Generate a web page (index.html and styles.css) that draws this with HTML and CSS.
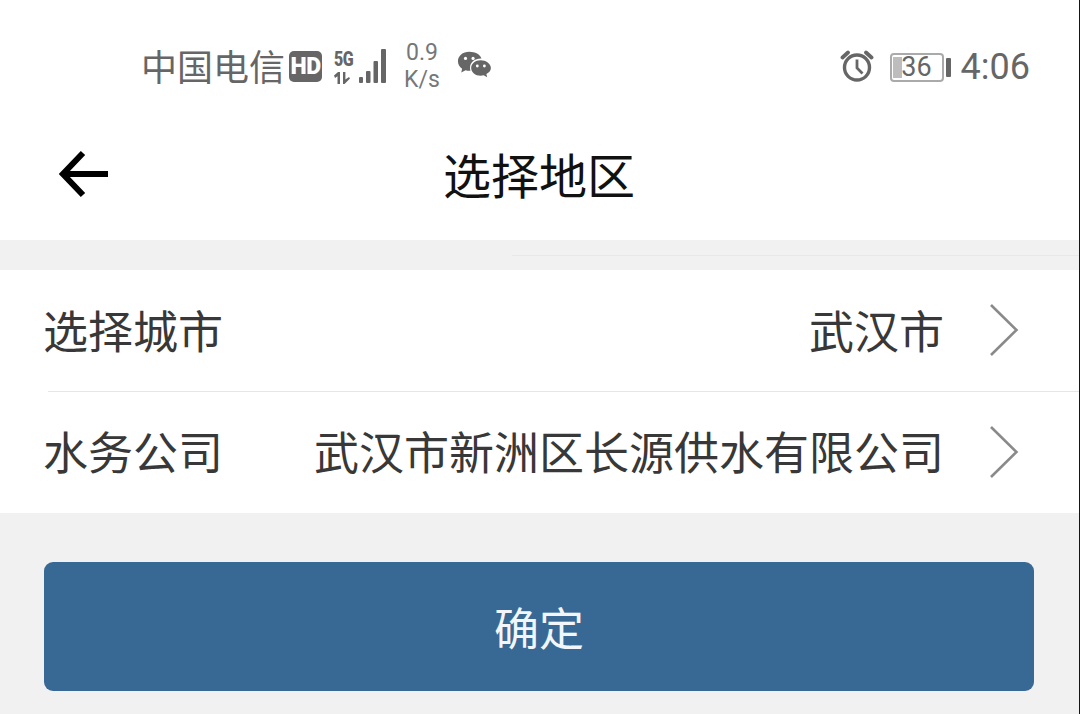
FILE: index.html
```html
<!DOCTYPE html>
<html lang="zh">
<head>
<meta charset="utf-8">
<title>选择地区</title>
<link rel="stylesheet" href="styles.css">
</head>
<body>
<div class="screen">
  <header class="header">
    <div class="status">
      <div class="status-left">
        <span class="carrier">中国电信</span>
        <span class="hd">HD</span>
        <span class="net">
          <span class="net-labels"><span class="net-5g">5G</span><svg class="net-arrows" width="20" height="12" viewBox="0 0 20 12"><g fill="#666"><path d="M0 3.500 4 0h2v12H3.500V4.200L1 6z"/><path d="M9 0h2.400v7.500L15 5l1 1.500L10.500 12H9z"/></g></svg></span>
          <svg class="signal" width="28" height="36" viewBox="0 0 28 36"><g fill="#666"><rect x="0" y="29" width="4" height="6" rx="1"/><rect x="7" y="23" width="4.500" height="12" rx="1"/><rect x="14.500" y="13" width="4.500" height="22" rx="1"/><rect x="22" y="1" width="5" height="34" rx="1"/></g></svg>
        </span>
        <span class="speed"><span>0.9</span><span>K/s</span></span>
        <svg class="wechat" width="34" height="32" viewBox="0 0 36 32"><path fill="#666" d="M13 1C6 1 1 5.500 1 11c0 3.200 1.700 6 4.400 7.800L4.500 23l4.600-2.500c1.300.4 2.500.5 3.900.5.400 0 .8 0 1.200-.1-.3-1-.4-2-.4-3 0-5.700 5-9.800 11.300-9.800h.8C24.500 3.900 19.300 1 13 1z"/><path fill="#666" d="M25 10c-5.600 0-10 3.600-10 8.200s4.400 8.200 10 8.200c1.100 0 2.200-.2 3.200-.5l3.800 2.100-.9-3.400c2.900-1.500 4.800-3.900 4.800-6.400C35.900 13.600 30.600 10 25 10z"/><g fill="#fff"><circle cx="9" cy="8" r="1.700"/><circle cx="17" cy="8" r="1.700"/><circle cx="21.500" cy="16" r="1.500"/><circle cx="29" cy="16" r="1.500"/></g></svg>
      </div>
      <div class="status-right">
        <svg class="alarm" width="34" height="34" viewBox="0 0 34 34"><g fill="none" stroke="#666"><circle cx="17" cy="18.500" r="12.500" stroke-width="3.400"/><path d="M17 10.500v8.500l5.500 5.500" stroke-width="2.800"/><path d="M2.500 8.500 8 3.500M31.500 8.500 26 3.500" stroke-width="3.800" stroke-linecap="round"/></g></svg>
        <span class="battery"><span class="battery-body"><span class="battery-fill"></span><span class="battery-num">36</span></span><span class="battery-tip"></span></span>
        <span class="clock">4:06</span>
      </div>
    </div>
    <div class="nav">
      <svg class="back" width="52" height="48" viewBox="0 0 52 48"><path d="M49 24H5M24 3 4 24l20 21" fill="none" stroke="#000" stroke-width="6"/></svg>
      <h1 class="title">选择地区</h1>
    </div>
  </header>
  <div class="band"></div>
  <section class="list">
    <div class="row">
      <span class="label">选择城市</span>
      <span class="value">武汉市</span>
      <svg class="chevron" width="30" height="54" viewBox="0 0 30 54"><path d="M2 2l25.500 25L2 52" fill="none" stroke="#8a8a8a" stroke-width="2.600"/></svg>
    </div>
    <div class="row row-line">
      <span class="label">水务公司</span>
      <span class="value">武汉市新洲区长源供水有限公司</span>
      <svg class="chevron" width="30" height="54" viewBox="0 0 30 54"><path d="M2 2l25.500 25L2 52" fill="none" stroke="#8a8a8a" stroke-width="2.600"/></svg>
    </div>
  </section>
  <div class="actions">
    <button class="confirm" type="button">确定</button>
  </div>
</div>
</body>
</html>
```

FILE: styles.css
```css
* { box-sizing: border-box; }
html, body { margin: 0; padding: 0; }
body {
  width: 1080px;
  height: 714px;
  overflow: hidden;
  background: #151515;
  font-family: "Noto Sans CJK SC", "Noto Sans", sans-serif;
}
.screen { width: 1079px; height: 714px; background: #f1f1f2; }
.header { height: 240px; background: #fff; }
.status {
  height: 120px;
  display: flex;
  justify-content: space-between;
  align-items: center;
  padding: 12px 49px 0 141px;
  color: #666;
}
.status-left, .status-right { display: flex; align-items: center; }
.carrier { font-size: 36px; line-height: 40px; position: relative; top: -1px; }
.hd {
  margin-left: 4px;
  width: 33px;
  height: 31px;
  border-radius: 5px;
  background: #666;
  color: #fff;
  font: 900 23px/31px "Roboto", sans-serif;
  letter-spacing: -0.5px;
  text-align: center;
}
.net { margin-left: 12px; display: flex; align-items: center; }
.net-labels { display: flex; flex-direction: column; width: 25px; }
.net-5g {
  font: 900 20px/20px "Roboto", sans-serif;
  letter-spacing: -0.5px;
  transform: scaleX(0.8);
  transform-origin: left center;
  color: #666;
}
.net-arrows { margin-top: 3px; }
.speed {
  margin-left: 17px;
  display: flex;
  flex-direction: column;
  align-items: center;
  font: 23px/27px "Roboto", sans-serif;
  color: #777;
}
.wechat { margin-left: 17px; }
.alarm { margin-right: 16px; }
.battery { display: flex; align-items: center; margin-right: 10px; position: relative; top: 1px; }
.battery-body {
  position: relative;
  width: 54px;
  height: 29px;
  border: 2px solid #aaa;
  border-radius: 4px;
  display: flex;
  align-items: center;
  justify-content: flex-end;
  padding-right: 10px;
}
.battery-fill {
  position: absolute;
  left: 1px;
  top: 2px;
  bottom: 2px;
  width: 9px;
  background: #bdbdbd;
}
.battery-num { position: relative; font: 27px/27px "Roboto", sans-serif; color: #666; }
.battery-tip { width: 5px; height: 19px; margin-left: 2px; background: #666; border-radius: 1px; }
.clock { font: 36px/40px "Roboto", sans-serif; color: #666; position: relative; top: 1px; }
.nav {
  position: relative;
  height: 120px;
  display: flex;
  align-items: center;
  justify-content: center;
  padding-bottom: 14px;
}
.back { position: absolute; left: 59px; top: 30px; }
.title { margin: 0 0 0 -1px; font-size: 48px; line-height: 60px; font-weight: 400; color: #111; }
.band { position: relative; height: 30px; }
.band::after {
  content: "";
  position: absolute;
  left: 512px;
  right: 0;
  top: 15px;
  height: 1px;
  background: #e8e8e8;
}
.list { background: #fff; }
.row {
  height: 121.500px;
  display: flex;
  align-items: center;
  padding: 0 60px 3px 43px;
  font-size: 45px;
  color: #383838;
}
.row-line { position: relative; }
.row-line::before {
  content: "";
  position: absolute;
  left: 48px;
  right: 0;
  top: -1px;
  height: 1px;
  background: #e6e6e6;
}
.label { flex: none; }
.value { margin-left: auto; }
.chevron { margin-left: 45px; flex: none; position: relative; top: 1px; }
.actions { padding: 49px 45px 0 44px; }
.confirm {
  display: block;
  width: 100%;
  height: 129px;
  border: 0;
  border-radius: 9px;
  background: #386994;
  color: #f2f6fa;
  font: 400 45px/60px "Noto Sans CJK SC", sans-serif;
  padding: 0;
}
```
